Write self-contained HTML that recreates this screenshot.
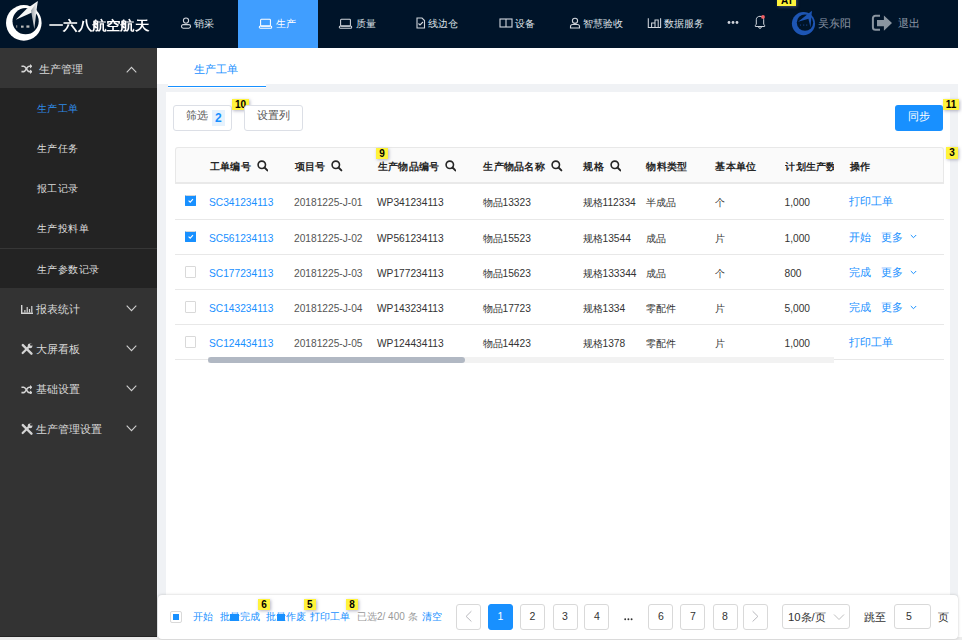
<!DOCTYPE html>
<html><head><meta charset="utf-8"><style>
*{box-sizing:border-box;margin:0;padding:0}
html,body{width:962px;height:640px;overflow:hidden;background:#fff;font-family:"Liberation Sans",sans-serif;}
.a{position:absolute;white-space:nowrap;line-height:1}
.r{position:absolute}
.nav{color:#dde1e6;font-size:9.8px;font-weight:500}
.sb{color:#d9d9d9;font-size:10.5px;font-weight:500}
.sbs{color:#dcdcdc;font-size:10px;font-weight:500;letter-spacing:0.4px}
.badge{position:absolute;background:#fff33b;color:#000;font-weight:bold;font-size:10px;line-height:11px;text-align:center;box-shadow:1px 1px 3px rgba(120,120,150,.55)}
.th{font-size:10px;font-weight:bold;color:#262626;letter-spacing:0.3px}
.td{font-size:10.2px;color:#333;font-weight:500}
.lk{color:#1890ff}
.c6{color:#555}
.act{font-size:10.5px;color:#1890ff;font-weight:500}
.hl{position:absolute;left:175px;width:769px;height:1px;background:#e8e8e8}
.cb{position:absolute;left:185px;width:11px;height:11.5px;border:1px solid #d9d9d9;border-radius:1px;background:#fff}
.cb.on{background:#1890ff;border-color:#1890ff;border-top-color:#d8d8d8}
.pg{position:absolute;top:604px;width:25px;height:26px;border:1px solid #d9d9d9;border-radius:3px;background:#fff}
.ft{font-size:10px;color:#1890ff;font-weight:500}
</style></head><body>
<div class="r" style="left:0px;top:0px;width:958px;height:48px;background:#001429;"></div>
<div class="r" style="left:0px;top:48px;width:157px;height:589px;background:#333;"></div>
<div class="r" style="left:0px;top:636px;width:157px;height:1px;background:#252525;"></div>
<div class="r" style="left:0px;top:637px;width:962px;height:3px;background:#ececec;"></div>
<div class="r" style="left:157px;top:48px;width:801px;height:589px;background:#f0f2f5;"></div>
<div class="r" style="left:157px;top:48px;width:801px;height:36px;background:#fff;"></div>
<div class="r" style="left:166px;top:92px;width:784px;height:545px;background:#fff;"></div>
<svg class="a" style="left:0px;top:0px" width="48" height="48" viewBox="0 0 48 48"><defs><mask id="lm"><rect width="48" height="48" fill="#fff"/><circle cx="25.6" cy="21.2" r="13.1" fill="#000"/></mask>
<linearGradient id="lg" x1="0" y1="0" x2="1" y2="0"><stop offset="0" stop-color="#9aa0a8"/><stop offset="1" stop-color="#fff"/></linearGradient></defs>
<circle cx="23.8" cy="22.9" r="17.8" fill="#fff" mask="url(#lm)"/>
<polygon points="15.8,19.8 27,8.4 37.8,1 32,12.6" fill="#f6f6f6"/>
<polygon points="37.8,1 31,10.5 34.3,29 36.3,12" fill="url(#lg)"/>
<rect x="16.3" y="25.2" width="0.9" height="2.5" fill="#aaa"/><rect x="21" y="25.6" width="2.6" height="2.1" fill="#bbb"/><rect x="26.4" y="25.4" width="3" height="2.3" fill="#bbb"/></svg>
<div class="a " style="left:49px;top:18.5px;font-size:14.3px;font-weight:bold;color:#fff;letter-spacing:0.3px;transform:scaleY(0.9);transform-origin:0 0">一六八航空航天</div>
<div class="r" style="left:238px;top:0px;width:80px;height:48px;background:#409eff;"></div>
<svg class="a" style="left:180px;top:17px" width="12" height="12" viewBox="0 0 12 12"><circle cx="6" cy="3.6" r="2.6" fill="none" stroke="#d0d5dc" stroke-width="1.1"/><rect x="1.5" y="7.6" width="9" height="3.6" rx="1.6" fill="none" stroke="#d0d5dc" stroke-width="1.1"/></svg>
<div class="a nav" style="left:194px;top:18.5px;">销采</div>
<svg class="a" style="left:258px;top:17px" width="15" height="12" viewBox="0 0 15 12"><rect x="2.6" y="2.3" width="9.8" height="6.8" rx="0.8" fill="none" stroke="#fff" stroke-width="1.05"/><rect x="1.3" y="8.9" width="12.4" height="2.4" rx="1.1" fill="none" stroke="#fff" stroke-width="1.05"/></svg>
<div class="a nav" style="left:276px;top:18.5px;color:#fff">生产</div>
<svg class="a" style="left:338px;top:17px" width="15" height="12" viewBox="0 0 15 12"><rect x="2.6" y="2.3" width="9.8" height="6.8" rx="0.8" fill="none" stroke="#d0d5dc" stroke-width="1.05"/><rect x="1.3" y="8.9" width="12.4" height="2.4" rx="1.1" fill="none" stroke="#d0d5dc" stroke-width="1.05"/></svg>
<div class="a nav" style="left:356px;top:18.5px;">质量</div>
<svg class="a" style="left:415px;top:17px" width="11" height="12" viewBox="0 0 11 12"><path d="M2 1h5l2.5 2.5V11H2z" fill="none" stroke="#d0d5dc" stroke-width="1.1"/><path d="M3.5 6.5l1.5 1.5 3-3" fill="none" stroke="#d0d5dc" stroke-width="1.1"/></svg>
<div class="a nav" style="left:428px;top:18.5px;">线边仓</div>
<svg class="a" style="left:499px;top:17px" width="14" height="12" viewBox="0 0 14 12"><rect x="1" y="2" width="12" height="8" fill="none" stroke="#d0d5dc" stroke-width="1.1"/><path d="M7 2v8" fill="none" stroke="#d0d5dc" stroke-width="1.1"/></svg>
<div class="a nav" style="left:515px;top:18.5px;">设备</div>
<svg class="a" style="left:569px;top:17px" width="12" height="12" viewBox="0 0 12 12"><circle cx="6" cy="3.8" r="2.6" fill="none" stroke="#d0d5dc" stroke-width="1.1"/><path d="M1.5 11V9.5c0-1.2 1-2 2.2-2h4.6c1.2 0 2.2.8 2.2 2V11z" fill="none" stroke="#d0d5dc" stroke-width="1.1"/></svg>
<div class="a nav" style="left:583px;top:18.5px;">智慧验收</div>
<svg class="a" style="left:647px;top:17px" width="15" height="12" viewBox="0 0 15 12"><path d="M1.3 1.2v9.3h12.3V1.2M4.6 10.5V6h3.4v4.5M8 10.5V3h3.2v7.5" fill="none" stroke="#d0d5dc" stroke-width="1.05"/></svg>
<div class="a nav" style="left:664px;top:18.5px;">数据服务</div>
<svg class="a" style="left:727px;top:20px" width="12" height="5" viewBox="0 0 12 5"><circle cx="2" cy="2.5" r="1.4" fill="#d0d5dc"/><circle cx="6" cy="2.5" r="1.4" fill="#d0d5dc"/><circle cx="10" cy="2.5" r="1.4" fill="#d0d5dc"/></svg>
<svg class="a" style="left:753px;top:14px" width="14" height="16" viewBox="0 0 14 16"><path d="M3.3 10.2V5.6C3.3 3.6 4.9 2.3 7 2.3s3.7 1.3 3.7 3.3v4.6l.9 1.1v1.2H2.4v-1.2z" fill="none" stroke="#d0d5dc" stroke-width="1"/><path d="M5.6 12.9a1.4 1.4 0 0 0 2.8 0" fill="none" stroke="#d0d5dc" stroke-width="1"/><circle cx="10" cy="2.9" r="1.9" fill="#f26266"/></svg>
<svg class="a" style="left:790px;top:9px" width="28" height="28" viewBox="0 0 28 28"><defs><mask id="am"><rect width="28" height="28" fill="#fff"/><circle cx="15" cy="13.6" r="8.2" fill="#000"/></mask></defs>
<circle cx="13.5" cy="14.6" r="11.6" fill="#1d55b3" mask="url(#am)"/>
<polygon points="8.1,12.7 21.9,1.75 19.5,9.6" fill="#1d55b3"/>
<polygon points="21.9,1.75 18,8 20.5,18.6 21.3,9" fill="#1d55b3"/>
<rect x="10" y="15.5" width="1" height="1.2" fill="#123a7a"/><rect x="13" y="15.5" width="1.3" height="1.2" fill="#123a7a"/><rect x="16" y="15.5" width="1.3" height="1.2" fill="#123a7a"/></svg>
<div class="a nav" style="left:818px;top:18.0px;color:#8e98a6;font-size:10.6px">吴东阳</div>
<div class="badge" style="left:777px;top:-5px;width:19px;height:11px;letter-spacing:0.8px;text-indent:0.8px">AI</div>
<svg class="a" style="left:871px;top:14px" width="22" height="18" viewBox="0 0 22 18"><path d="M9 1.8H4.4a2.5 2.5 0 0 0-2.5 2.5v9a2.5 2.5 0 0 0 2.5 2.5H9" fill="none" stroke="#8a95a0" stroke-width="2"/><path d="M6 6.1h6.9V1.4L21 9.1l-8.1 7.7V12.3H6z" fill="#8a95a0"/></svg>
<div class="a nav" style="left:898px;top:18.0px;color:#8e98a6;font-size:10.6px">退出</div>
<div class="r" style="left:0px;top:48px;width:157px;height:40px;background:#353535;"></div>
<div class="r" style="left:0px;top:88px;width:157px;height:200px;background:#232323;"></div>
<div class="r" style="left:0px;top:248px;width:157px;height:1px;background:#363636;"></div>
<svg class="a" style="left:20.6px;top:64px" width="11.7" height="9.9" viewBox="0 0 13 11"><path d="M0.5 2.5h2.5c2.5 0 3.5 6 6 6h1.5M0.5 8.5h2.5c2.5 0 3.5-6 6-6h1.5" fill="none" stroke="#d4d4d4" stroke-width="1.8"/><path d="M10 0l3 2.5-3 2.5zM10 6l3 2.5-3 2.5z" fill="#d4d4d4"/></svg>
<div class="a sb" style="left:39px;top:64px;">生产管理</div>
<svg class="a" style="left:126px;top:65.5px" width="11" height="7" viewBox="0 0 11 7"><path d="M0.7 6.3l4.8-5 4.8 5" fill="none" stroke="#cfcfcf" stroke-width="1.1"/></svg>
<div class="a sbs" style="left:37px;top:104px;color:#2f8ae6">生产工单</div>
<div class="a sbs" style="left:37px;top:144px;">生产任务</div>
<div class="a sbs" style="left:37px;top:184px;">报工记录</div>
<div class="a sbs" style="left:37px;top:224px;">生产投料单</div>
<div class="a sbs" style="left:37px;top:265px;">生产参数记录</div>
<svg class="a" style="left:20.5px;top:304.5px" width="12" height="9" viewBox="0 0 12 9"><path d="M0.7 0v8.3H12" fill="none" stroke="#d4d4d4" stroke-width="1.4"/><path d="M3.3 5h1.2v2.5H3.3zM5.6 2h1.2v5.5H5.6zM7.9 4h1.2v3.5H7.9zM10.2 1h1.2v6.5h-1.2z" fill="#d4d4d4"/></svg>
<div class="a sb" style="left:36px;top:304px;">报表统计</div>
<svg class="a" style="left:126px;top:305px" width="11" height="7" viewBox="0 0 11 7"><path d="M0.7 0.7l4.8 5 4.8-5" fill="none" stroke="#cfcfcf" stroke-width="1.1"/></svg>
<svg class="a" style="left:20.6px;top:343.0px" width="12" height="12" viewBox="0 0 13 13"><path d="M2 2.2l9.3 9.3" stroke="#d4d4d4" stroke-width="2.6" stroke-linecap="round"/><path d="M10.8 1.8l-9 9" stroke="#d4d4d4" stroke-width="2.4" stroke-linecap="round"/><circle cx="9.8" cy="3.2" r="2.6" fill="#d4d4d4"/><circle cx="11" cy="1.8" r="1.2" fill="#333"/></svg>
<div class="a sb" style="left:36px;top:344px;">大屏看板</div>
<svg class="a" style="left:126px;top:345px" width="11" height="7" viewBox="0 0 11 7"><path d="M0.7 0.7l4.8 5 4.8-5" fill="none" stroke="#cfcfcf" stroke-width="1.1"/></svg>
<svg class="a" style="left:20.6px;top:384.5px" width="11.7" height="9.9" viewBox="0 0 13 11"><path d="M0.5 2.5h2.5c2.5 0 3.5 6 6 6h1.5M0.5 8.5h2.5c2.5 0 3.5-6 6-6h1.5" fill="none" stroke="#d4d4d4" stroke-width="1.8"/><path d="M10 0l3 2.5-3 2.5zM10 6l3 2.5-3 2.5z" fill="#d4d4d4"/></svg>
<div class="a sb" style="left:36px;top:384px;">基础设置</div>
<svg class="a" style="left:126px;top:385px" width="11" height="7" viewBox="0 0 11 7"><path d="M0.7 0.7l4.8 5 4.8-5" fill="none" stroke="#cfcfcf" stroke-width="1.1"/></svg>
<svg class="a" style="left:20.6px;top:423.0px" width="12" height="12" viewBox="0 0 13 13"><path d="M2 2.2l9.3 9.3" stroke="#d4d4d4" stroke-width="2.6" stroke-linecap="round"/><path d="M10.8 1.8l-9 9" stroke="#d4d4d4" stroke-width="2.4" stroke-linecap="round"/><circle cx="9.8" cy="3.2" r="2.6" fill="#d4d4d4"/><circle cx="11" cy="1.8" r="1.2" fill="#333"/></svg>
<div class="a sb" style="left:36px;top:424px;">生产管理设置</div>
<svg class="a" style="left:126px;top:425px" width="11" height="7" viewBox="0 0 11 7"><path d="M0.7 0.7l4.8 5 4.8-5" fill="none" stroke="#cfcfcf" stroke-width="1.1"/></svg>
<div class="r" style="left:168px;top:84px;width:98px;height:4px;background:#fff;"></div>
<div class="r" style="left:168px;top:86px;width:98px;height:1.2px;background:#1890ff;"></div>
<div class="a " style="left:194px;top:63.5px;font-size:10.5px;color:#1890ff;font-weight:500">生产工单</div>
<div class="r" style="left:173px;top:105px;width:59px;height:26px;background:#fff;border:1px solid #dcdfe6;border-radius:3px"></div>
<div class="a " style="left:186px;top:110px;font-size:10.5px;color:#555;font-weight:500">筛选</div>
<div class="r" style="left:212px;top:110px;width:13px;height:16px;background:#e6f2fd;"></div>
<div class="a " style="left:215px;top:111.5px;font-size:12px;font-weight:bold;color:#1890ff">2</div>
<div class="badge" style="left:232px;top:99px;width:17px;height:11px">10</div>
<div class="r" style="left:244px;top:105px;width:59px;height:26px;background:#fff;border:1px solid #dcdfe6;border-radius:3px"></div>
<div class="a " style="left:257px;top:110px;font-size:10.5px;color:#555;font-weight:500">设置列</div>
<div class="r" style="left:895px;top:105px;width:48px;height:26px;background:#1890ff;border-radius:3px"></div>
<div class="a " style="left:907.5px;top:110.5px;font-size:11px;color:#fff;font-weight:500">同步</div>
<div class="badge" style="left:943px;top:99px;width:16px;height:11px">11</div>
<div class="r" style="left:175px;top:147px;width:769px;height:37px;background:#fafafa;border:1px solid #e8e8e8;border-bottom:2px solid #e9e9e9;border-radius:3px 3px 0 0"></div>
<div class="a th" style="left:209.8px;top:161.5px;">工单编号</div>
<svg class="a" style="left:256.7px;top:160px" width="11.5" height="11.5" viewBox="0 0 11.5 11.5"><circle cx="4.8" cy="4.8" r="3.7" fill="none" stroke="#262626" stroke-width="1.6"/><path d="M7.5 7.5l2.9 2.9" stroke="#262626" stroke-width="1.9" stroke-linecap="round"/></svg>
<div class="a th" style="left:294.8px;top:161.5px;">项目号</div>
<svg class="a" style="left:331.2px;top:160px" width="11.5" height="11.5" viewBox="0 0 11.5 11.5"><circle cx="4.8" cy="4.8" r="3.7" fill="none" stroke="#262626" stroke-width="1.6"/><path d="M7.5 7.5l2.9 2.9" stroke="#262626" stroke-width="1.9" stroke-linecap="round"/></svg>
<div class="a th" style="left:377.8px;top:161.5px;">生产物品编号</div>
<svg class="a" style="left:444.7px;top:160px" width="11.5" height="11.5" viewBox="0 0 11.5 11.5"><circle cx="4.8" cy="4.8" r="3.7" fill="none" stroke="#262626" stroke-width="1.6"/><path d="M7.5 7.5l2.9 2.9" stroke="#262626" stroke-width="1.9" stroke-linecap="round"/></svg>
<div class="a th" style="left:483.3px;top:161.5px;">生产物品名称</div>
<svg class="a" style="left:551.2px;top:160px" width="11.5" height="11.5" viewBox="0 0 11.5 11.5"><circle cx="4.8" cy="4.8" r="3.7" fill="none" stroke="#262626" stroke-width="1.6"/><path d="M7.5 7.5l2.9 2.9" stroke="#262626" stroke-width="1.9" stroke-linecap="round"/></svg>
<div class="a th" style="left:583.3px;top:161.5px;">规格</div>
<svg class="a" style="left:609.7px;top:160px" width="11.5" height="11.5" viewBox="0 0 11.5 11.5"><circle cx="4.8" cy="4.8" r="3.7" fill="none" stroke="#262626" stroke-width="1.6"/><path d="M7.5 7.5l2.9 2.9" stroke="#262626" stroke-width="1.9" stroke-linecap="round"/></svg>
<div class="a th" style="left:646.3px;top:161.5px;">物料类型</div>
<div class="a th" style="left:715.3px;top:161.5px;">基本单位</div>
<div class="a th" style="left:785.3px;top:161.5px;width:48.5px;overflow:hidden">计划生产数</div>
<div class="a th" style="left:849.8px;top:161.5px;">操作</div>
<div class="hl" style="top:218.5px"></div>
<div class="cb on" style="top:194.5px"><svg class="a" style="left:0px;top:0px" width="9" height="9" viewBox="0 0 9 9"><path d="M2.6 4.7l1.6 1.5 2.8-3" fill="none" stroke="#fff" stroke-width="1.1"/></svg></div>
<div class="a td lk" style="left:209px;top:197.5px;">SC341234113</div>
<div class="a td c6" style="left:294px;top:197.5px;">20181225-J-01</div>
<div class="a td" style="left:377px;top:197.5px;">WP341234113</div>
<div class="a td" style="left:482.5px;top:197.5px;">物品13323</div>
<div class="a td" style="left:582.5px;top:197.5px;">规格112334</div>
<div class="a td" style="left:645.5px;top:197.5px;">半成品</div>
<div class="a td" style="left:714.5px;top:197.5px;">个</div>
<div class="a td" style="left:784.5px;top:197.5px;">1,000</div>
<div class="a act" style="left:849px;top:195.5px;">打印工单</div>
<div class="hl" style="top:254px"></div>
<div class="cb on" style="top:230.5px"><svg class="a" style="left:0px;top:0px" width="9" height="9" viewBox="0 0 9 9"><path d="M2.6 4.7l1.6 1.5 2.8-3" fill="none" stroke="#fff" stroke-width="1.1"/></svg></div>
<div class="a td lk" style="left:209px;top:233.5px;">SC561234113</div>
<div class="a td c6" style="left:294px;top:233.5px;">20181225-J-02</div>
<div class="a td" style="left:377px;top:233.5px;">WP561234113</div>
<div class="a td" style="left:482.5px;top:233.5px;">物品15523</div>
<div class="a td" style="left:582.5px;top:233.5px;">规格13544</div>
<div class="a td" style="left:645.5px;top:233.5px;">成品</div>
<div class="a td" style="left:714.5px;top:233.5px;">片</div>
<div class="a td" style="left:784.5px;top:233.5px;">1,000</div>
<div class="a act" style="left:849px;top:231.5px;">开始</div>
<div class="a act" style="left:881px;top:231.5px;">更多</div>
<svg class="a" style="left:910px;top:234.1px" width="7" height="5" viewBox="0 0 7 5"><path d="M0.8 1l2.7 2.7L6.2 1" fill="none" stroke="#1890ff" stroke-width="1"/></svg>
<div class="hl" style="top:289px"></div>
<div class="cb" style="top:266.0px"></div>
<div class="a td lk" style="left:209px;top:269.0px;">SC177234113</div>
<div class="a td c6" style="left:294px;top:269.0px;">20181225-J-03</div>
<div class="a td" style="left:377px;top:269.0px;">WP177234113</div>
<div class="a td" style="left:482.5px;top:269.0px;">物品15623</div>
<div class="a td" style="left:582.5px;top:269.0px;">规格133344</div>
<div class="a td" style="left:645.5px;top:269.0px;">成品</div>
<div class="a td" style="left:714.5px;top:269.0px;">个</div>
<div class="a td" style="left:784.5px;top:269.0px;">800</div>
<div class="a act" style="left:849px;top:267.0px;">完成</div>
<div class="a act" style="left:881px;top:267.0px;">更多</div>
<svg class="a" style="left:910px;top:269.6px" width="7" height="5" viewBox="0 0 7 5"><path d="M0.8 1l2.7 2.7L6.2 1" fill="none" stroke="#1890ff" stroke-width="1"/></svg>
<div class="hl" style="top:324px"></div>
<div class="cb" style="top:301.0px"></div>
<div class="a td lk" style="left:209px;top:304.0px;">SC143234113</div>
<div class="a td c6" style="left:294px;top:304.0px;">20181225-J-04</div>
<div class="a td" style="left:377px;top:304.0px;">WP143234113</div>
<div class="a td" style="left:482.5px;top:304.0px;">物品17723</div>
<div class="a td" style="left:582.5px;top:304.0px;">规格1334</div>
<div class="a td" style="left:645.5px;top:304.0px;">零配件</div>
<div class="a td" style="left:714.5px;top:304.0px;">片</div>
<div class="a td" style="left:784.5px;top:304.0px;">5,000</div>
<div class="a act" style="left:849px;top:302.0px;">完成</div>
<div class="a act" style="left:881px;top:302.0px;">更多</div>
<svg class="a" style="left:910px;top:304.6px" width="7" height="5" viewBox="0 0 7 5"><path d="M0.8 1l2.7 2.7L6.2 1" fill="none" stroke="#1890ff" stroke-width="1"/></svg>
<div class="hl" style="top:359px"></div>
<div class="cb" style="top:336.0px"></div>
<div class="a td lk" style="left:209px;top:339.0px;">SC124434113</div>
<div class="a td c6" style="left:294px;top:339.0px;">20181225-J-05</div>
<div class="a td" style="left:377px;top:339.0px;">WP124434113</div>
<div class="a td" style="left:482.5px;top:339.0px;">物品14423</div>
<div class="a td" style="left:582.5px;top:339.0px;">规格1378</div>
<div class="a td" style="left:645.5px;top:339.0px;">零配件</div>
<div class="a td" style="left:714.5px;top:339.0px;">片</div>
<div class="a td" style="left:784.5px;top:339.0px;">1,000</div>
<div class="a act" style="left:849px;top:337.0px;">打印工单</div>
<div class="r" style="left:208px;top:357px;width:626px;height:6px;background:#f2f2f2;"></div>
<div class="r" style="left:208px;top:357px;width:257px;height:6px;background:#b1b8c3;border-radius:3px"></div>
<div class="badge" style="left:376px;top:147.5px;width:12px;height:11px">9</div>
<div class="badge" style="left:946px;top:147px;width:12px;height:12px;line-height:12px">3</div>
<div class="r" style="left:158px;top:595px;width:800px;height:44px;background:#fff;border-radius:4px;box-shadow:0 0 3px rgba(0,0,0,.22)"></div>
<div class="r" style="left:170px;top:611px;width:11.5px;height:11.5px;background:#fff;border:1px solid #d9d9d9;border-radius:2px"></div>
<div class="r" style="left:172.5px;top:613.5px;width:6.5px;height:6.5px;background:#1890ff;"></div>
<div class="a ft" style="left:192.5px;top:611.5px;">开始</div>
<div class="a ft" style="left:219.5px;top:611.5px;">批量完成</div>
<div class="r" style="left:230px;top:613.7px;width:8.6px;height:7px;background:#1890ff;"></div>
<div class="a ft" style="left:266px;top:611.5px;">批量作废</div>
<div class="r" style="left:276.6px;top:613.7px;width:8.2px;height:7px;background:#1890ff;"></div>
<div class="a ft" style="left:310.3px;top:611.5px;">打印工单</div>
<div class="a ft" style="left:357px;top:611.5px;color:#999">已选2/ 400 条</div>
<div class="a ft" style="left:422.2px;top:611.5px;">清空</div>
<div class="badge" style="left:258px;top:599px;width:12px;height:11px">6</div>
<div class="badge" style="left:304px;top:599px;width:11.5px;height:11px">5</div>
<div class="badge" style="left:346px;top:599px;width:12px;height:11px">8</div>
<div class="pg" style="left:456px;"></div>
<div class="pg" style="left:488px;background:#1890ff;border-color:#1890ff"></div>
<div class="pg" style="left:520px;"></div>
<div class="pg" style="left:552.5px;"></div>
<div class="pg" style="left:584.3px;"></div>
<div class="pg" style="left:648.3px;"></div>
<div class="pg" style="left:680.3px;"></div>
<div class="pg" style="left:712.5px;"></div>
<div class="pg" style="left:743.4px;"></div>
<svg class="a" style="left:463px;top:610px" width="10" height="14" viewBox="0 0 10 14"><path d="M8.4 1.2L3.1 6.4 8.4 11.5" fill="none" stroke="#b8b8bd" stroke-width="1"/></svg>
<svg class="a" style="left:751px;top:610px" width="10" height="14" viewBox="0 0 10 14"><path d="M1.6 1.2L6.9 6.4 1.6 11.5" fill="none" stroke="#b8b8bd" stroke-width="1"/></svg>
<div class="a" style="left:488px;top:611px;width:25px;text-align:center;font-size:10.5px;color:#fff">1</div>
<div class="a" style="left:520px;top:611px;width:25px;text-align:center;font-size:10.5px;color:#333">2</div>
<div class="a" style="left:552.5px;top:611px;width:25px;text-align:center;font-size:10.5px;color:#333">3</div>
<div class="a" style="left:584.3px;top:611px;width:25px;text-align:center;font-size:10.5px;color:#333">4</div>
<div class="a" style="left:648.3px;top:611px;width:25px;text-align:center;font-size:10.5px;color:#333">6</div>
<div class="a" style="left:680.3px;top:611px;width:25px;text-align:center;font-size:10.5px;color:#333">7</div>
<div class="a" style="left:712.5px;top:611px;width:25px;text-align:center;font-size:10.5px;color:#333">8</div>
<svg class="a" style="left:623px;top:617px" width="11" height="4" viewBox="0 0 11 4"><circle cx="2.2" cy="2.3" r="0.95" fill="#333"/><circle cx="5.4" cy="2.3" r="0.95" fill="#333"/><circle cx="8.6" cy="2.3" r="0.95" fill="#333"/></svg>
<div class="r" style="left:781.8px;top:604.2px;width:68.7px;height:25px;background:#fff;border:1px solid #d9d9d9;border-radius:3px"></div>
<div class="a " style="left:788px;top:611.5px;font-size:11.3px;color:#333">10条/页</div>
<svg class="a" style="left:833px;top:613px" width="12" height="8" viewBox="0 0 12 8"><path d="M1 1.5l5 5 5-5" fill="none" stroke="#bfbfbf" stroke-width="1"/></svg>
<div class="a " style="left:864px;top:612px;font-size:10.5px;color:#333">跳至</div>
<div class="r" style="left:893.7px;top:604.2px;width:37px;height:25px;background:#fff;border:1px solid #d9d9d9;border-radius:3px"></div>
<div class="a " style="left:906px;top:611px;font-size:10.5px;color:#333">5</div>
<div class="a " style="left:938px;top:612px;font-size:10.5px;color:#333">页</div>
</body></html>
